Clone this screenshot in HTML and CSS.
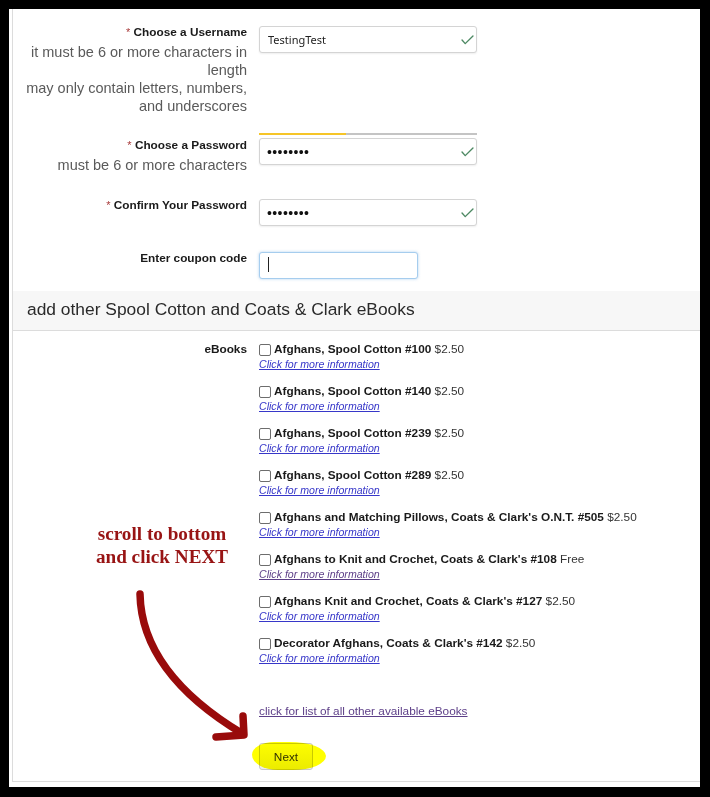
FILE: index.html
```html
<!DOCTYPE html>
<html lang="en">
<head>
<meta charset="utf-8">
<title>Create account</title>
<link rel="stylesheet" href="styles.css">
</head>
<body>
<div class="frame">
  <div class="panel">
    <div class="row row-user">
      <div class="label-col">
        <div class="label"><span class="req">*</span> Choose a Username</div>
        <div class="hint">it must be 6 or more characters in length<br>may only contain letters, numbers, and underscores</div>
      </div>
      <div class="field-col">
        <div class="field">
          <input class="input" type="text" value="TestingTest">
          <svg class="check" viewBox="0 0 14 11" width="13" height="10"><polyline points="1,5.5 4.5,9.5 13,1"/></svg>
        </div>
      </div>
    </div>

    <div class="row row-pass">
      <div class="label-col">
        <div class="label"><span class="req">*</span> Choose a Password</div>
        <div class="hint">must be 6 or more characters</div>
      </div>
      <div class="field-col">
        <div class="strength"><div class="strength-fill" style="width:40%"></div></div>
        <div class="field">
          <input class="input pw" type="password" value="abcdefgh">
          <svg class="check" viewBox="0 0 14 11" width="13" height="10"><polyline points="1,5.5 4.5,9.5 13,1"/></svg>
        </div>
      </div>
    </div>

    <div class="row row-confirm">
      <div class="label-col">
        <div class="label"><span class="req">*</span> Confirm Your Password</div>
      </div>
      <div class="field-col">
        <div class="field">
          <input class="input pw" type="password" value="abcdefgh">
          <svg class="check" viewBox="0 0 14 11" width="13" height="10"><polyline points="1,5.5 4.5,9.5 13,1"/></svg>
        </div>
      </div>
    </div>

    <div class="row row-coupon">
      <div class="label-col">
        <div class="label">Enter coupon code</div>
      </div>
      <div class="field-col">
        <div class="field coupon">
          <input class="input focus" type="text" value="">
          <span class="caret"></span>
        </div>
      </div>
    </div>

    <div class="band">add other Spool Cotton and Coats &amp; Clark eBooks</div>

    <div class="books">
      <div class="label-col">
        <div class="label">eBooks</div>
      </div>
      <div class="book-col">
        <div class="item">
          <div class="title"><input type="checkbox" class="cb"><span><b>Afghans, Spool Cotton #100</b> $2.50</span></div>
          <div class="info-line"><a class="info" href="#">Click for more information</a></div>
        </div>
        <div class="item">
          <div class="title"><input type="checkbox" class="cb"><span><b>Afghans, Spool Cotton #140</b> $2.50</span></div>
          <div class="info-line"><a class="info" href="#">Click for more information</a></div>
        </div>
        <div class="item">
          <div class="title"><input type="checkbox" class="cb"><span><b>Afghans, Spool Cotton #239</b> $2.50</span></div>
          <div class="info-line"><a class="info" href="#">Click for more information</a></div>
        </div>
        <div class="item">
          <div class="title"><input type="checkbox" class="cb"><span><b>Afghans, Spool Cotton #289</b> $2.50</span></div>
          <div class="info-line"><a class="info" href="#">Click for more information</a></div>
        </div>
        <div class="item">
          <div class="title"><input type="checkbox" class="cb"><span><b>Afghans and Matching Pillows, Coats &amp; Clark's O.N.T. #505</b> $2.50</span></div>
          <div class="info-line"><a class="info" href="#">Click for more information</a></div>
        </div>
        <div class="item">
          <div class="title"><input type="checkbox" class="cb"><span><b>Afghans to Knit and Crochet, Coats &amp; Clark's #108</b> Free</span></div>
          <div class="info-line"><a class="info visited" href="#">Click for more information</a></div>
        </div>
        <div class="item">
          <div class="title"><input type="checkbox" class="cb"><span><b>Afghans Knit and Crochet, Coats &amp; Clark's #127</b> $2.50</span></div>
          <div class="info-line"><a class="info" href="#">Click for more information</a></div>
        </div>
        <div class="item">
          <div class="title"><input type="checkbox" class="cb"><span><b>Decorator Afghans, Coats &amp; Clark's #142</b> $2.50</span></div>
          <div class="info-line"><a class="info" href="#">Click for more information</a></div>
        </div>
        <div class="more-line"><a class="more" href="#">click for list of all other available eBooks</a></div>
        <div class="actions"><button class="next" type="button">Next</button></div>
      </div>
    </div>
  </div>

  <div class="note">scroll to bottom<br>and click NEXT</div>
  <svg class="arrow" viewBox="9 9 691 778" width="691" height="778">
    <path d="M140 594 C 141 648, 178 695, 243 734"/>
    <path d="M243 716 L244 735 L216 737"/>
  </svg>
  <div class="highlight"></div>
</div>
</body>
</html>
```

FILE: styles.css
```css
* { box-sizing: border-box; }

html, body {
  margin: 0;
  padding: 0;
  background: #000;
}

body {
  width: 710px;
  height: 797px;
  overflow: hidden;
  font-family: "Liberation Sans", Arial, sans-serif;
  color: #1a1a1a;
}

.frame {
  position: relative;
  margin: 9px 0 0 9px;
  width: 691px;
  height: 778px;
  background: #fff;
}

.panel {
  margin-left: 3px;
  border-left: 1px solid #dcdcdc;
  border-bottom: 1px solid #dcdcdc;
  padding: 16px 0 11px 0;
}

/* form rows */
.row {
  display: grid;
  grid-template-columns: 224px 218px;
  column-gap: 12px;
  padding-left: 10px;
}

.row-user { margin-bottom: 18px; }
.row-pass { margin-bottom: 24px; }
.row-pass .label-col { padding-top: 5px; }
.row-pass .field-col { padding-top: 0; }
.row-confirm { margin-bottom: 25px; }
.row-coupon { margin-bottom: 12px; }

.label-col { text-align: right; }

.label {
  font-weight: bold;
  font-size: 11.8px;
  line-height: 14px;
  color: #1a1a1a;
}

.req {
  font-weight: normal;
  font-size: 11px;
  color: #a83a3a;
}

.hint {
  margin-top: 4px;
  font-size: 14.5px;
  line-height: 18px;
  color: #5a5a5a;
}

.field-col { padding-top: 1px; }

.field {
  position: relative;
  width: 218px;
}

.field.coupon { width: 159px; }

.input {
  display: block;
  width: 100%;
  height: 27px;
  margin: 0;
  padding: 0 24px 0 8px;
  border: 1px solid #d4d4d4;
  border-radius: 3px;
  background: #fff;
  box-shadow: 0 1px 2px rgba(0, 0, 0, 0.07);
  font-family: "Noto Sans", "Liberation Sans", sans-serif;
  font-size: 11px;
  color: #222;
  outline: none;
}

.input.pw {
  font-family: "Liberation Sans", sans-serif;
  font-size: 14px;
  letter-spacing: 0.4px;
  padding-left: 7px;
  color: #111;
}

.input.focus {
  border-color: #a6cdee;
  box-shadow: 0 0 3px rgba(110, 170, 225, 0.55);
}

.caret {
  position: absolute;
  left: 9px;
  top: 5px;
  width: 1px;
  height: 15px;
  background: #222;
}

.check {
  position: absolute;
  right: 3px;
  top: 9px;
  fill: none;
  stroke: #4d8963;
  stroke-width: 1.5;
  stroke-linecap: round;
  stroke-linejoin: round;
}

.strength {
  height: 2px;
  margin-bottom: 3px;
  background: #c4c4c4;
}

.strength-fill {
  height: 100%;
  background: #f6c528;
}

/* section band */
.band {
  height: 40px;
  padding: 0 0 3px 14px;
  line-height: 36px;
  font-size: 17.4px;
  color: #2a2a2a;
  background: #f7f7f7;
  border-bottom: 1px solid #dcdcdc;
}

/* eBooks */
.books {
  display: grid;
  grid-template-columns: 224px 1fr;
  column-gap: 12px;
  padding: 11px 0 0 10px;
}

.book-col {
  display: flex;
  flex-direction: column;
}

.item { margin-bottom: 14px; }

.title {
  display: flex;
  align-items: flex-start;
  white-space: nowrap;
  font-size: 11.8px;
  line-height: 14px;
  color: #1a1a1a;
}

.title span { color: #333; }
.title b { color: #1a1a1a; }

.cb {
  -webkit-appearance: none;
  appearance: none;
  flex-shrink: 0;
  width: 12px;
  height: 12px;
  margin: 2px 3px 0 0;
  border: 1px solid #6d6d6d;
  border-radius: 2px;
  background: #fff;
}

.info-line {
  line-height: 14px;
  height: 14px;
}

.info {
  font-size: 10.6px;
  font-style: italic;
  color: #3737c9;
  text-decoration: underline;
}

.info.visited { color: #5d3f88; }

.more-line {
  margin-top: 25px;
  line-height: 14px;
}

.more {
  font-size: 11.8px;
  color: #5d3f88;
  text-decoration: underline;
}

.actions { margin-top: 25px; }

.next {
  display: block;
  width: 54px;
  height: 27px;
  margin: 0;
  padding: 0;
  border: 1px solid #c9c9c9;
  border-radius: 3px;
  background: linear-gradient(#fdfdfd, #ececec);
  font-family: "Liberation Sans", Arial, sans-serif;
  font-size: 11.8px;
  color: #333;
}

/* annotation overlay */
.note {
  position: absolute;
  left: 73px;
  top: 513px;
  width: 160px;
  text-align: center;
  font-family: "Liberation Serif", "Times New Roman", serif;
  font-weight: bold;
  font-size: 19.2px;
  line-height: 23px;
  color: #981414;
}

.arrow {
  position: absolute;
  left: 0;
  top: 0;
  pointer-events: none;
  fill: none;
  stroke: #990b0b;
  stroke-width: 7.5;
  stroke-linecap: round;
  stroke-linejoin: round;
}

.highlight {
  position: absolute;
  left: 243px;
  top: 733px;
  width: 74px;
  height: 28px;
  background: #ffff00;
  mix-blend-mode: multiply;
  border-radius: 30% 50% 45% 35% / 45% 50% 50% 55%;
  pointer-events: none;
}
```
